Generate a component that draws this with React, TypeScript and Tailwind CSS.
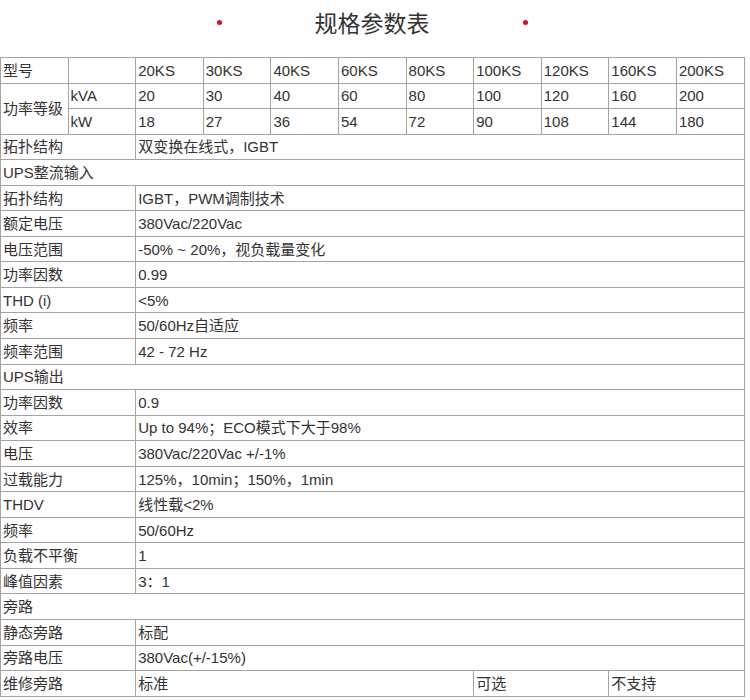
const font = "font-['Liberation_Sans','Noto_Sans_CJK_SC',sans-serif]";

const models = ["20KS", "30KS", "40KS", "60KS", "80KS", "100KS", "120KS", "160KS", "200KS"];
const kva = ["20", "30", "40", "60", "80", "100", "120", "160", "200"];
const kw = ["18", "27", "36", "54", "72", "90", "108", "144", "180"];

// [label, value] rows; a null value means a section row spanning the whole table
const specs: Array<[string, string | null]> = [
  ["拓扑结构", "双变换在线式，IGBT"],
  ["UPS整流输入", null],
  ["拓扑结构", "IGBT，PWM调制技术"],
  ["额定电压", "380Vac/220Vac"],
  ["电压范围", "-50% ~ 20%，视负载量变化"],
  ["功率因数", "0.99"],
  ["THD (i)", "<5%"],
  ["频率", "50/60Hz自适应"],
  ["频率范围", "42 - 72 Hz"],
  ["UPS输出", null],
  ["功率因数", "0.9"],
  ["效率", "Up to 94%；ECO模式下大于98%"],
  ["电压", "380Vac/220Vac +/-1%"],
  ["过载能力", "125%，10min；150%，1min"],
  ["THDV", "线性载<2%"],
  ["频率", "50/60Hz"],
  ["负载不平衡", "1"],
  ["峰值因素", "3：1"],
  ["旁路", null],
  ["静态旁路", "标配"],
  ["旁路电压", "380Vac(+/-15%)"],
];

const td = "border border-[#a3a3a3] px-[2px] py-0 align-middle whitespace-nowrap overflow-hidden";
const tr = "h-[25.56px]";

export default function App() {
  return (
    <div className={`w-[750px] h-[700px] bg-white text-[#333] ${font}`}>
      <div className="w-[744px] h-[44px] flex items-center justify-center gap-[93px]">
        <span className="w-[5px] h-[5px] rounded-full bg-[#d0112b]" />
        <h1 className="text-[23px] leading-none text-[#333] font-['Noto_Sans_CJK_SC',sans-serif]">规格参数表</h1>
        <span className="w-[5px] h-[5px] rounded-full bg-[#d0112b]" />
      </div>

      <table className="mt-[13px] w-[744px] table-fixed border-collapse border border-[#8c8c8c] text-[15px] leading-none">
        <colgroup>
          {Array.from({ length: 11 }).map((_, i) => (
            <col key={i} className="w-[67.6px]" />
          ))}
        </colgroup>
        <tbody>
          <tr className={tr}>
            <td className={td}>型号</td>
            <td className={td}></td>
            {models.map((m) => (
              <td key={m} className={td}>{m}</td>
            ))}
          </tr>
          <tr className={tr}>
            <td className={td} rowSpan={2}>功率等级</td>
            <td className={td}>kVA</td>
            {kva.map((v, i) => (
              <td key={i} className={td}>{v}</td>
            ))}
          </tr>
          <tr className={tr}>
            <td className={td}>kW</td>
            {kw.map((v, i) => (
              <td key={i} className={td}>{v}</td>
            ))}
          </tr>
          {specs.map(([label, value], i) =>
            value === null ? (
              <tr key={i} className={tr}>
                <td className={td} colSpan={11}>{label}</td>
              </tr>
            ) : (
              <tr key={i} className={tr}>
                <td className={td} colSpan={2}>{label}</td>
                <td className={td} colSpan={9}>{value}</td>
              </tr>
            )
          )}
          <tr className={tr}>
            <td className={td} colSpan={2}>维修旁路</td>
            <td className={td} colSpan={5}>标准</td>
            <td className={td} colSpan={2}>可选</td>
            <td className={td} colSpan={2}>不支持</td>
          </tr>
        </tbody>
      </table>
    </div>
  );
}
